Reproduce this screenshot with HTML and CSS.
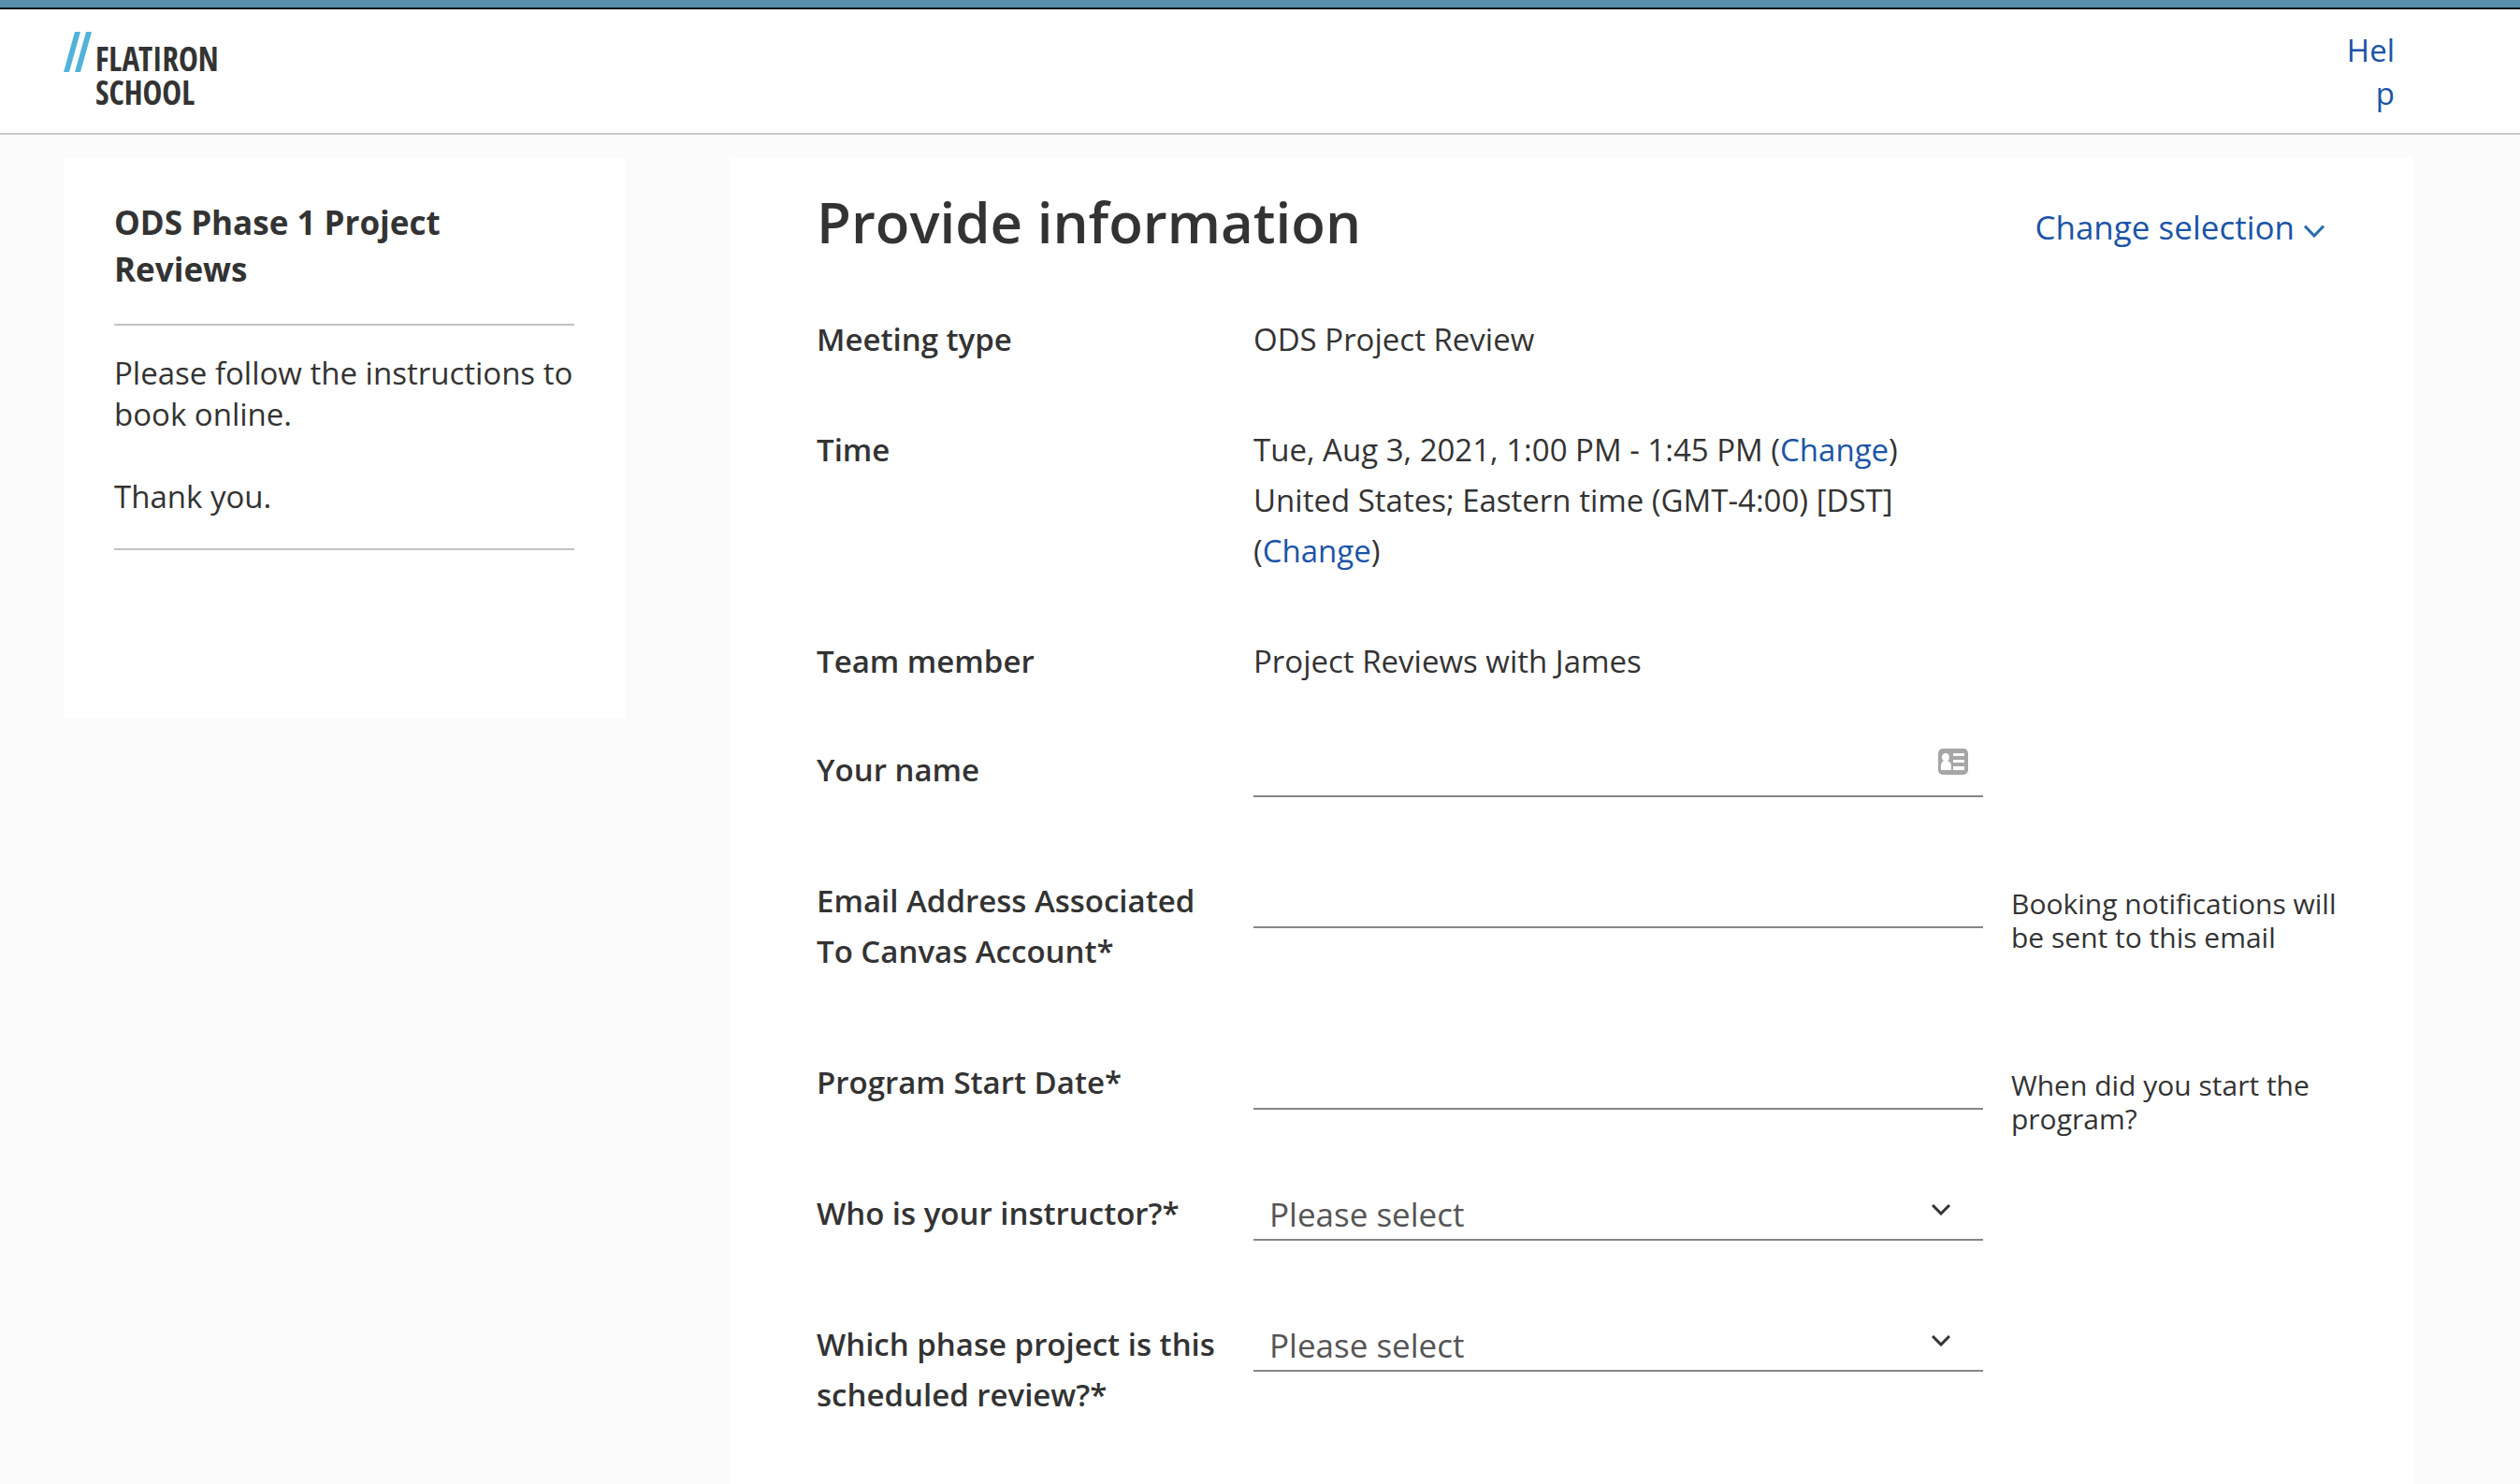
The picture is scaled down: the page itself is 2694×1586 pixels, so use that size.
FILE: index.html
```html
<!DOCTYPE html>
<html lang="en">
<head>
<meta charset="utf-8">
<meta name="viewport" content="width=device-width, initial-scale=1">
<title>ODS Phase 1 Project Reviews</title>
<link rel="stylesheet" href="styles.css">
</head>
<body>
<header class="site-header">
  <div class="logo">
    <svg class="logo-mark" viewBox="0 0 30 43" aria-hidden="true"><path d="M12 0h6L6 43H0zM24 0h6L18 43h-6z"/></svg>
    <span class="logo-name">FLATIRON<br>SCHOOL</span>
  </div>
  <a class="help" href="#help">Help</a>
</header>

<div class="page">
  <aside class="card sidebar">
    <h2 class="sidebar-title">ODS Phase 1 Project Reviews</h2>
    <div class="sidebar-text">
      <p>Please follow the instructions to book online.</p>
      <p>Thank you.</p>
    </div>
  </aside>

  <main class="card booking">
    <div class="booking-head">
      <h1>Provide information</h1>
      <button class="change-selection" type="button">Change selection
        <svg class="link-chevron" viewBox="0 0 22 14" aria-hidden="true"><path d="M1 1.500l10 10.500 10-10.500"/></svg>
      </button>
    </div>

    <dl class="facts">
      <div class="row">
        <dt class="label">Meeting type</dt>
        <dd class="value">ODS Project Review</dd>
      </div>
      <div class="row">
        <dt class="label">Time</dt>
        <dd class="value">Tue, Aug 3, 2021, 1:00 PM - 1:45 PM (<a href="#time">Change</a>)<br>United States; Eastern time (GMT-4:00) [DST] (<a href="#zone">Change</a>)</dd>
      </div>
      <div class="row">
        <dt class="label">Team member</dt>
        <dd class="value">Project Reviews with James</dd>
      </div>
    </dl>

    <form class="fields">
      <div class="row">
        <label class="label" for="name">Your name</label>
        <div class="control">
          <input class="field" id="name" type="text">
          <svg class="contact-icon" viewBox="0 0 32 28" aria-hidden="true">
            <rect width="32" height="28" rx="5" fill="#a6a6a6"/>
            <path fill="#fff" d="M8 5c2.300 0 4 1.900 4 4.300 0 1.700-.7 3-1.700 3.900 2.300.8 3.700 2.600 3.700 5.300V23H3v-4.500c0-2.700 1.200-4.500 3-5.300C4.800 12.300 4 11 4 9.300 4 6.900 5.700 5 8 5zM16 5h12v3H16zM16 12h12v3H16zM16 19h12v4H16z"/>
          </svg>
        </div>
      </div>
      <div class="row">
        <label class="label" for="email">Email Address Associated To Canvas Account*</label>
        <div class="control"><input class="field" id="email" type="email" aria-describedby="email-note"></div>
        <p class="note" id="email-note">Booking notifications will be sent to this email</p>
      </div>
      <div class="row">
        <label class="label" for="start">Program Start Date*</label>
        <div class="control"><input class="field" id="start" type="text" aria-describedby="start-note"></div>
        <p class="note" id="start-note">When did you start the program?</p>
      </div>
      <div class="row">
        <label class="label" for="instructor">Who is your instructor?*</label>
        <div class="control">
          <select class="field" id="instructor"><option>Please select</option></select>
          <svg class="select-chevron" viewBox="0 0 20 12" aria-hidden="true"><path d="M1 1l9 9 9-9"/></svg>
        </div>
      </div>
      <div class="row">
        <label class="label" for="phase">Which phase project is this scheduled review?*</label>
        <div class="control">
          <select class="field" id="phase"><option>Please select</option></select>
          <svg class="select-chevron" viewBox="0 0 20 12" aria-hidden="true"><path d="M1 1l9 9 9-9"/></svg>
        </div>
      </div>
    </form>
  </main>
</div>
</body>
</html>
```
FILE: styles.css
```css
* { box-sizing: border-box; }

body {
  margin: 0;
  border-top: 8px solid #5890ac;
  background: #fbfbfb;
  color: #333;
  font: 33px/54px "Open Sans", "Noto Sans", sans-serif;
}

h1, h2, p, dl, dd { margin: 0; }

a, .change-selection { color: #1b54a6; text-decoration: none; }

/* Header */
.site-header {
  display: flex;
  justify-content: space-between;
  align-items: flex-start;
  min-height: 136px;
  padding: 21px 134px 16px 68px;
  background: #fff;
  border-top: 2px solid #0b0f12;
  border-bottom: 2px solid #c8c8c8;
}

.logo { display: flex; gap: 4px; padding-top: 3px; }
.logo-mark { width: 30px; height: 43px; fill: #52b3d9; }
.logo-name {
  padding-top: 11px;
  font: 700 35px/36px "Open Sans Condensed", "Roboto Condensed", "Open Sans", sans-serif;
}

.help {
  width: 54px;
  line-height: 46px;
  text-align: right;
  word-break: break-all;
}

/* Page */
.page {
  display: grid;
  grid-template-columns: 600px minmax(0, 1fr);
  gap: 112px;
  align-items: start;
  padding: 24px 114px 0 68px;
}

.card { background: #fff; }

.sidebar { min-height: 600px; padding: 45px 54px; }
.sidebar-title {
  padding-bottom: 33px;
  border-bottom: 2px solid #c2c2c2;
  font-size: 35px;
  line-height: 50px;
}
.sidebar-text {
  display: grid;
  gap: 44px;
  padding: 29px 0 33px;
  border-bottom: 2px solid #c2c2c2;
  line-height: 44px;
}

.booking { padding: 29px 63px 0 93px; }
.booking-head {
  display: flex;
  justify-content: space-between;
  align-items: flex-end;
  margin-bottom: 59px;
  padding-right: 32px;
}
h1 { font-size: 60px; font-weight: 600; line-height: 80px; }

.change-selection {
  display: flex;
  align-items: center;
  gap: 10px;
  padding: 0;
  border: 0;
  background: none;
  font: 35px/68px "Open Sans", "Noto Sans", sans-serif;
}
.link-chevron { width: 22px; height: 14px; margin-top: 8px; }
.link-chevron path { fill: none; stroke: #2b6cb0; stroke-width: 3; }

/* Rows */
.row {
  display: grid;
  grid-template-columns: 467fr 780fr 397fr;
}
.label { padding: 0 40px 86px 0; font-weight: 600; }
.facts .label, .value { padding-bottom: 64px; }
.facts .row:last-child > * { padding-bottom: 62px; }

.control { position: relative; }
.field {
  display: block;
  width: 100%;
  height: 56px;
  padding: 0 60px 0 17px;
  border: 0;
  border-bottom: 2px solid #858585;
  border-radius: 0;
  background: none;
  appearance: none;
  color: #555;
  font: 35px "Open Sans", "Noto Sans", sans-serif;
}

.contact-icon { position: absolute; top: 4px; right: 16px; width: 32px; height: 28px; }
.select-chevron {
  position: absolute;
  top: 17px;
  right: 35px;
  width: 20px;
  height: 12px;
  pointer-events: none;
}
.select-chevron path { fill: none; stroke: #333; stroke-width: 3; }

.note { padding: 12px 0 0 30px; font-size: 30px; line-height: 36px; }
```
